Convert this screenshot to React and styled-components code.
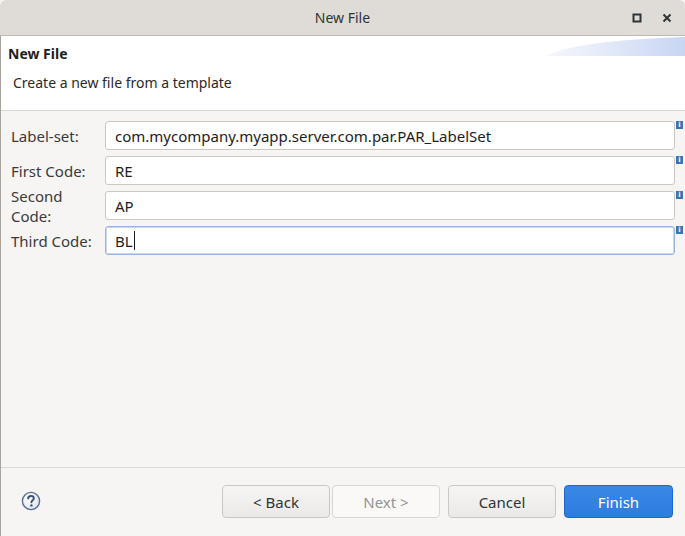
import React from 'react';
import styled, { createGlobalStyle } from 'styled-components';

const GlobalStyle = createGlobalStyle`
	html, body {
		margin: 0;
		padding: 0;
		background: #f6f5f4;
	}
	* {
		box-sizing: border-box;
	}
`;

const Window = styled.div`
	width: 685px;
	height: 536px;
	display: flex;
	flex-direction: column;
	background: #f6f5f4;
	font-family: 'Noto Sans', 'Open Sans', sans-serif;
	color: #2e3436;
	overflow: hidden;
`;

const TitleBar = styled.div`
	height: 36px;
	flex: none;
	display: grid;
	grid-template-columns: 1fr auto 1fr;
	align-items: center;
	background: #dfdcd8;
	border-bottom: 1px solid #bfb9b3;
	border-radius: 6px 6px 0 0;
	font-size: 14px;
`;

const Title = styled.div`
	grid-column: 2;
	color: #2e3436;
`;

const Controls = styled.div`
	grid-column: 3;
	display: flex;
	justify-content: flex-end;
	align-items: center;
	gap: 20px;
	padding-right: 13px;
`;

const Body = styled.div`
	flex: 1;
	display: flex;
	flex-direction: column;
	border-left: 1px solid #a9a39d;
`;

const Header = styled.div`
	position: relative;
	height: 75px;
	flex: none;
	background: #fff;
	border-bottom: 1px solid #dad6d2;
	padding: 8px 0 0 7px;
`;

const Banner = styled.svg`
	position: absolute;
	top: 0;
	right: 0;
`;

const HeaderTitle = styled.div`
	font-size: 14px;
	font-weight: 700;
	line-height: 20px;
	color: #1e1e1e;
`;

const HeaderText = styled.div`
	margin: 9px 0 0 5px;
	font-size: 14px;
	line-height: 20px;
	color: #2a2a2a;
`;

const Form = styled.div`
	flex: 1;
	display: grid;
	grid-template-columns: 94px 1fr 10px;
	grid-auto-rows: 29px;
	row-gap: 6px;
	align-content: start;
	padding: 10px 0 0 10px;
`;

const Label = styled.div`
	display: flex;
	align-items: center;
	font-size: 15px;
	color: #3a3a3a;
`;

const Field = styled.div`
	display: flex;
	align-items: center;
	padding-left: 9px;
	background: #fff;
	border: 1px solid ${(p) => (p.$focused ? '#98b6e0' : '#cdc7c2')};
	box-shadow: ${(p) => (p.$focused ? 'inset 0 0 0 1px #c5d7f0' : 'none')};
	border-radius: 3px;
	font-size: 15px;
	color: #1c1c1c;
	white-space: nowrap;
`;

const Caret = styled.span`
	display: inline-block;
	width: 1px;
	height: 19px;
	margin-left: 1px;
	background: #1c1c1c;
`;

const Info = styled.div`
	align-self: start;
	justify-self: start;
	margin-left: 1px;
	width: 7px;
	height: 8px;
	background: #3f74b4;
	color: #fff;
	font-family: 'DejaVu Sans', sans-serif;
	font-size: 7px;
	font-weight: 700;
	line-height: 8px;
	text-align: center;
`;

const Footer = styled.div`
	height: 69px;
	flex: none;
	display: flex;
	align-items: flex-start;
	border-top: 1px solid #dcd8d4;
	padding: 17px 12px 0 20px;
`;

const Help = styled.svg`
	margin-top: 6px;
`;

const Buttons = styled.div`
	margin-left: auto;
	display: flex;
	gap: 8px;
`;

const Pair = styled.div`
	display: flex;
	gap: 2px;
`;

const Button = styled.button`
	width: ${(p) => p.$width || 108}px;
	height: 33px;
	border-radius: 4px;
	font-family: 'Noto Sans', 'Open Sans', sans-serif;
	font-size: 15px;
	padding: 0;
	border: 1px solid #cdc7c2;
	background: linear-gradient(#f6f5f4, #ebe9e7);
	color: #2e3436;
	&:disabled {
		background: #faf9f8;
		border-color: #d9d5d1;
		color: #929595;
	}
`;

const PrimaryButton = styled(Button)`
	border-color: #1b6acb;
	background: linear-gradient(#3a88e6, #2d7ce0);
	color: #fff;
`;

const fields = [
	{ label: 'Label-set:', value: 'com.mycompany.myapp.server.com.par.PAR_LabelSet' },
	{ label: 'First Code:', value: 'RE' },
	{ label: 'Second Code:', value: 'AP' },
	{ label: 'Third Code:', value: 'BL', focused: true },
];

const App = () => {
	return (
		<Window>
			<GlobalStyle />
			<TitleBar>
				<Title>New File</Title>
				<Controls>
					<svg width='10' height='10' viewBox='0 0 10 10'>
						<rect x='1.5' y='1.5' width='7' height='7' fill='none' stroke='#2e3436' strokeWidth='2' />
					</svg>
					<svg width='10' height='10' viewBox='0 0 10 10'>
						<path d='M1.5 1.5 L8.5 8.5 M8.5 1.5 L1.5 8.5' stroke='#2e3436' strokeWidth='2' />
					</svg>
				</Controls>
			</TitleBar>
			<Body>
				<Header>
					<Banner width='140' height='20' viewBox='0 0 140 20'>
						<defs>
							<linearGradient id='banner' x1='0' x2='1' y1='0' y2='0'>
								<stop offset='0' stopColor='#f7f8fd' />
								<stop offset='1' stopColor='#c8d6f3' />
							</linearGradient>
						</defs>
						<path d='M0 20 C 20 10, 70 3, 140 1 L140 20 Z' fill='url(#banner)' />
					</Banner>
					<HeaderTitle>New File</HeaderTitle>
					<HeaderText>Create a new file from a template</HeaderText>
				</Header>
				<Form>
					{fields.map((f) => (
						<React.Fragment key={f.label}>
							<Label>{f.label}</Label>
							<Field $focused={f.focused}>
								{f.value}
								{f.focused && <Caret />}
							</Field>
							<Info>i</Info>
						</React.Fragment>
					))}
				</Form>
				<Footer>
					<Help width='20' height='20' viewBox='0 0 20 20'>
						<defs>
							<radialGradient id='help' cx='0.4' cy='0.35' r='0.7'>
								<stop offset='0' stopColor='#ffffff' />
								<stop offset='1' stopColor='#dfe4ec' />
							</radialGradient>
						</defs>
						<circle cx='10' cy='10' r='8.6' fill='url(#help)' stroke='#5a6f92' strokeWidth='1.4' />
						<path
							d='M7.2 7.6 C7.2 5.8 8.5 5 10 5 C11.6 5 12.8 6 12.8 7.4 C12.8 9.2 10.4 9.3 10.4 11.3'
							fill='none'
							stroke='#3e5378'
							strokeWidth='2'
							strokeLinecap='round'
						/>
						<circle cx='10.4' cy='14.4' r='1.2' fill='#3e5378' />
					</Help>
					<Buttons>
						<Pair>
							<Button>&lt; Back</Button>
							<Button disabled>Next &gt;</Button>
						</Pair>
						<Button>Cancel</Button>
						<PrimaryButton $width={109}>Finish</PrimaryButton>
					</Buttons>
				</Footer>
			</Body>
		</Window>
	);
};

export default App;
